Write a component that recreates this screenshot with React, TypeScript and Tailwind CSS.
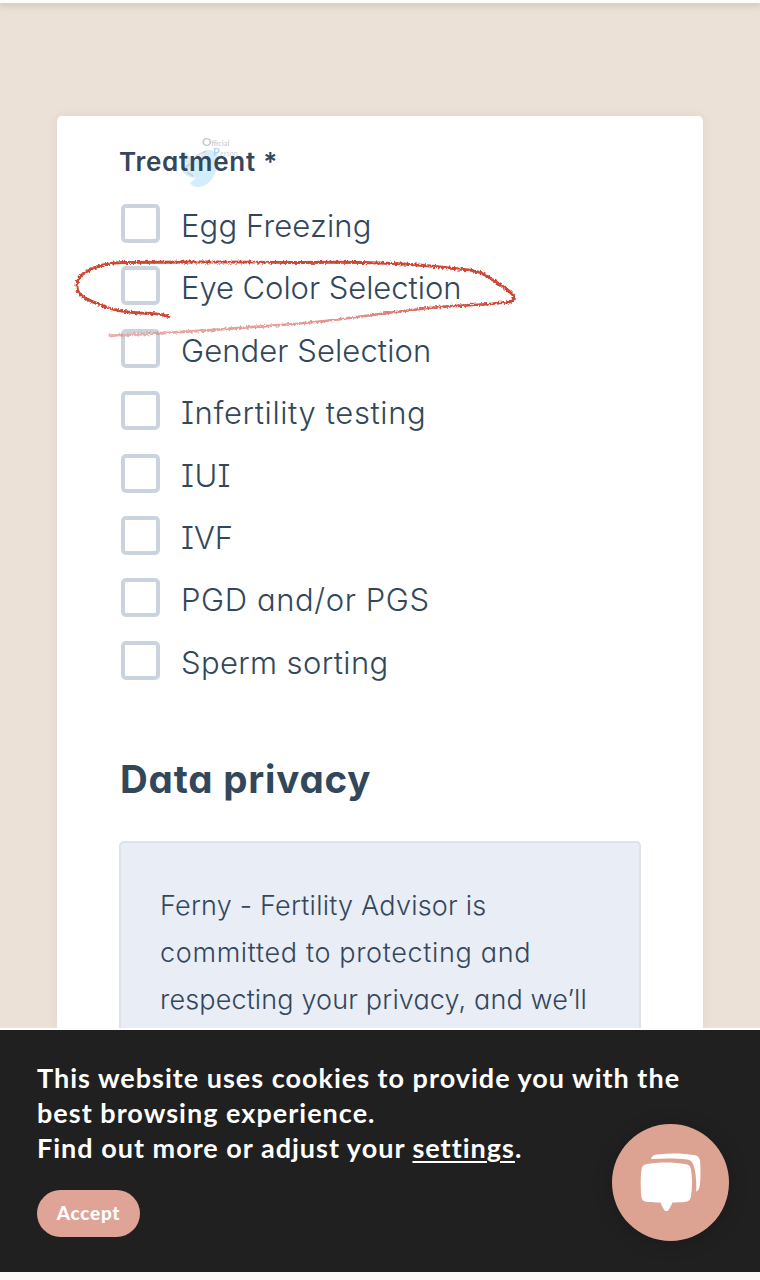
const treatments = [
  { label: "Egg Freezing", tracking: "tracking-[0.14px]" },
  { label: "Eye Color Selection", tracking: "tracking-[-0.05px]" },
  { label: "Gender Selection", tracking: "tracking-[0.08px]" },
  { label: "Infertility testing", tracking: "tracking-[0.6px]" },
  { label: "IUI", tracking: "tracking-[0.4px]" },
  { label: "IVF", tracking: "tracking-[0px]" },
  { label: "PGD and/or PGS", tracking: "tracking-[0.6px]" },
  { label: "Sperm sorting", tracking: "tracking-[0.36px]" },
];

function Watermark() {
  return (
    <svg className="pointer-events-none absolute left-[180px] top-[130px]" width="64" height="60" viewBox="180 130 64 60">
      <path
        d="M181 168c3 3 6 4 9 3-4-1-6-4-6-8 1 1 2 1 3 1-4-3-5-9-2-12 4 5 9 8 16 8-1-6 3-10 8-10 3 0 4 1 6 3l4-2-2 5 3-1-3 4c1 15-7 27-18 28-4 0-7-1-9-4l6-5c-8 0-13-4-15-10z"
        fill="#c6e7f9"
        opacity="0.75"
      />
      <g fontFamily="Lato, sans-serif" fontWeight="700" opacity="0.8">
        <text x="202" y="146" fontSize="12" fill="#b9bac2">O</text>
        <text x="211.500" y="146" fontSize="7" fill="#c2c2c8" textLength="18">fficial</text>
        <text x="213" y="156" fontSize="11" fill="#a9c9ee">P</text>
        <text x="220" y="156" fontSize="7" fill="#d0d0d6" textLength="18">erson</text>
      </g>
      <path d="M196 156l10-5M187 172l6 4M185 168l5-4" stroke="#c0b4b4" strokeWidth="1.8" opacity="0.5" />
    </svg>
  );
}

function PenMark() {
  return (
    <svg className="pointer-events-none absolute left-[70px] top-[250px]" width="455" height="95" viewBox="70 250 455 95" fill="none" strokeLinecap="round">
      <defs>
        <linearGradient id="fade" gradientUnits="userSpaceOnUse" x1="109" y1="0" x2="515" y2="0">
          <stop offset="0" stopColor="#d8857d" stopOpacity="0.65" />
          <stop offset="0.6" stopColor="#dc8078" stopOpacity="0.85" />
          <stop offset="0.85" stopColor="#d2584a" />
          <stop offset="1" stopColor="#c9402f" />
        </linearGradient>
        <filter id="chalk" x="-5%" y="-20%" width="110%" height="140%">
          <feTurbulence type="fractalNoise" baseFrequency="0.45" numOctaves="2" result="n" />
          <feDisplacementMap in="SourceGraphic" in2="n" scale="4" xChannelSelector="R" yChannelSelector="G" />
        </filter>
      </defs>
      <g filter="url(#chalk)">
        <path
          d="M169 316.5C161 314 153 313 140 313C125 312.500 112 310 101 305C90 301 80 297 77.500 290C75.500 281 79 276 85 272.500C95 266 106 263 122 262.500C180 261.500 250 262 300 262.500C360 261.500 405 263 445 267.500C465 270 477 269.500 486 275.500C497 283 507 288 513 295C516 299 514 301 509 302"
          stroke="#cd4636"
          strokeWidth="2.900"
        />
        <path d="M110 335.500C170 334 240 328 300 323.500C350 319 400 310.500 440 307C470 305 492 304.500 509 302" stroke="url(#fade)" strokeWidth="2.700" />
      </g>
    </svg>
  );
}

function ChatIcon() {
  return (
    <svg className="-translate-x-[0.5px] -translate-y-[2px]" width="60" height="60" viewBox="0 0 60 60" fill="#fff">
      <path d="M11 6.500C12.500 4.200 14 3.800 17 3.400C29 2 42 2 53.500 4C57.500 4.800 59.200 6.500 59.700 10.500C60.700 19 60.700 27 59.400 34C58.900 37.500 57.800 39.800 55.700 40.800C56 30 55.500 21 52.800 13.500C51.500 10.200 50 8.900 46.500 8.500C35 7 22 7.200 11 8.100C10.600 7.700 10.600 7.100 11 6.500Z" />
      <path d="M5.500 13.300C18 11 32 10.800 45.500 13.200C48.500 13.800 50 15.200 50.500 18.500C52 28 52 37 50.300 46C49.700 49 48.200 50.300 45.500 50.700C40 51.300 36 51.500 32 51.500C30.500 55 29 58 27.300 60Q26 61 24.700 60C22.800 58 21.300 55 20 51.500C15 51.500 10 51.300 5.700 50.700C3 50.300 1.500 49 1 46.200C-.5 37 -.5 27 1.200 17.800C1.700 15 3 13.800 5.500 13.300Z" />
    </svg>
  );
}

export default function App() {
  return (
    <div className="relative flex h-[1280px] w-[760px] flex-col overflow-hidden bg-[#ebe1d6] text-[#33475b]">
      <header className="relative h-[3px] shrink-0 bg-[#fdfdfb] shadow-[0_1px_7px_1px_rgba(120,110,90,0.3)]" />
      <main className="flex min-h-0 flex-1 flex-col overflow-hidden px-[57px] pt-[113px] font-['Inter',sans-serif] [font-feature-settings:'cv08','cv11']">
        <form className="flex w-[646px] flex-1 flex-col rounded-t-[5px] bg-white px-[62px] shadow-[0_0_10px_rgba(150,125,95,0.13)]">
          <Watermark />
          <h2 className="relative mt-[29px] h-[34px] whitespace-nowrap text-[26px] leading-[34px] font-semibold tracking-[0.75px]">Treatment *</h2>
          <ul className="mt-[25px] flex flex-col pl-[2px]">
            {treatments.map((t) => (
              <li key={t.label} className="h-[62.4px]">
                <label className="flex items-start gap-[21px]">
                  <input type="checkbox" className="h-[39px] w-[39px] shrink-0 appearance-none rounded-[5px] border-4 border-[#cbd3df] bg-white" />
                  <span className={`mt-[2px] whitespace-nowrap text-[31px] leading-[40px] font-[340] ${t.tracking}`}>{t.label}</span>
                </label>
              </li>
            ))}
          </ul>
          <h1 className="mt-[49px] h-[54px] whitespace-nowrap pl-px text-[38.5px] leading-[54px] font-bold tracking-[0.8px]">Data privacy</h1>
          <section className="mt-[35px] flex-1 rounded-t-[5px] border-2 border-b-0 border-[#dde3e9] bg-[#e9edf6] px-[39px] pt-[39px] text-[27px] leading-[47px] font-[330] whitespace-nowrap">
            <p className="tracking-[0.22px]">Ferny - Fertility Advisor is</p>
            <p className="tracking-[0.66px]">committed to protecting and</p>
            <p className="tracking-[0.14px]">respecting your privacy, and we’ll</p>
          </section>
        </form>
      </main>
      <footer className="h-[252px] shrink-0 border-t-2 border-b-8 border-t-white border-b-[#fcf8f5] bg-[#202020] pl-[37px] font-['Lato',sans-serif] text-white">
        <div className="pt-[30px] text-[27px] leading-[35px] font-bold whitespace-nowrap">
          <p className="tracking-[1px]">This website uses cookies to provide you with the</p>
          <p className="tracking-[1.02px]">best browsing experience.</p>
          <p className="tracking-[1px]">
            Find out more or adjust your <a className="underline decoration-2 underline-offset-[3px]">settings</a>.
          </p>
        </div>
        <button className="mt-[25px] h-[47px] w-[103px] rounded-full bg-[#dfa496] text-[19px] font-black tracking-[0.7px]">Accept</button>
      </footer>
      <button className="absolute left-[612px] top-[1124px] flex h-[117px] w-[117px] items-center justify-center rounded-full bg-[#dca393] shadow-[0_2px_20px_rgba(0,0,0,0.2)]">
        <ChatIcon />
      </button>
      <PenMark />
    </div>
  );
}
